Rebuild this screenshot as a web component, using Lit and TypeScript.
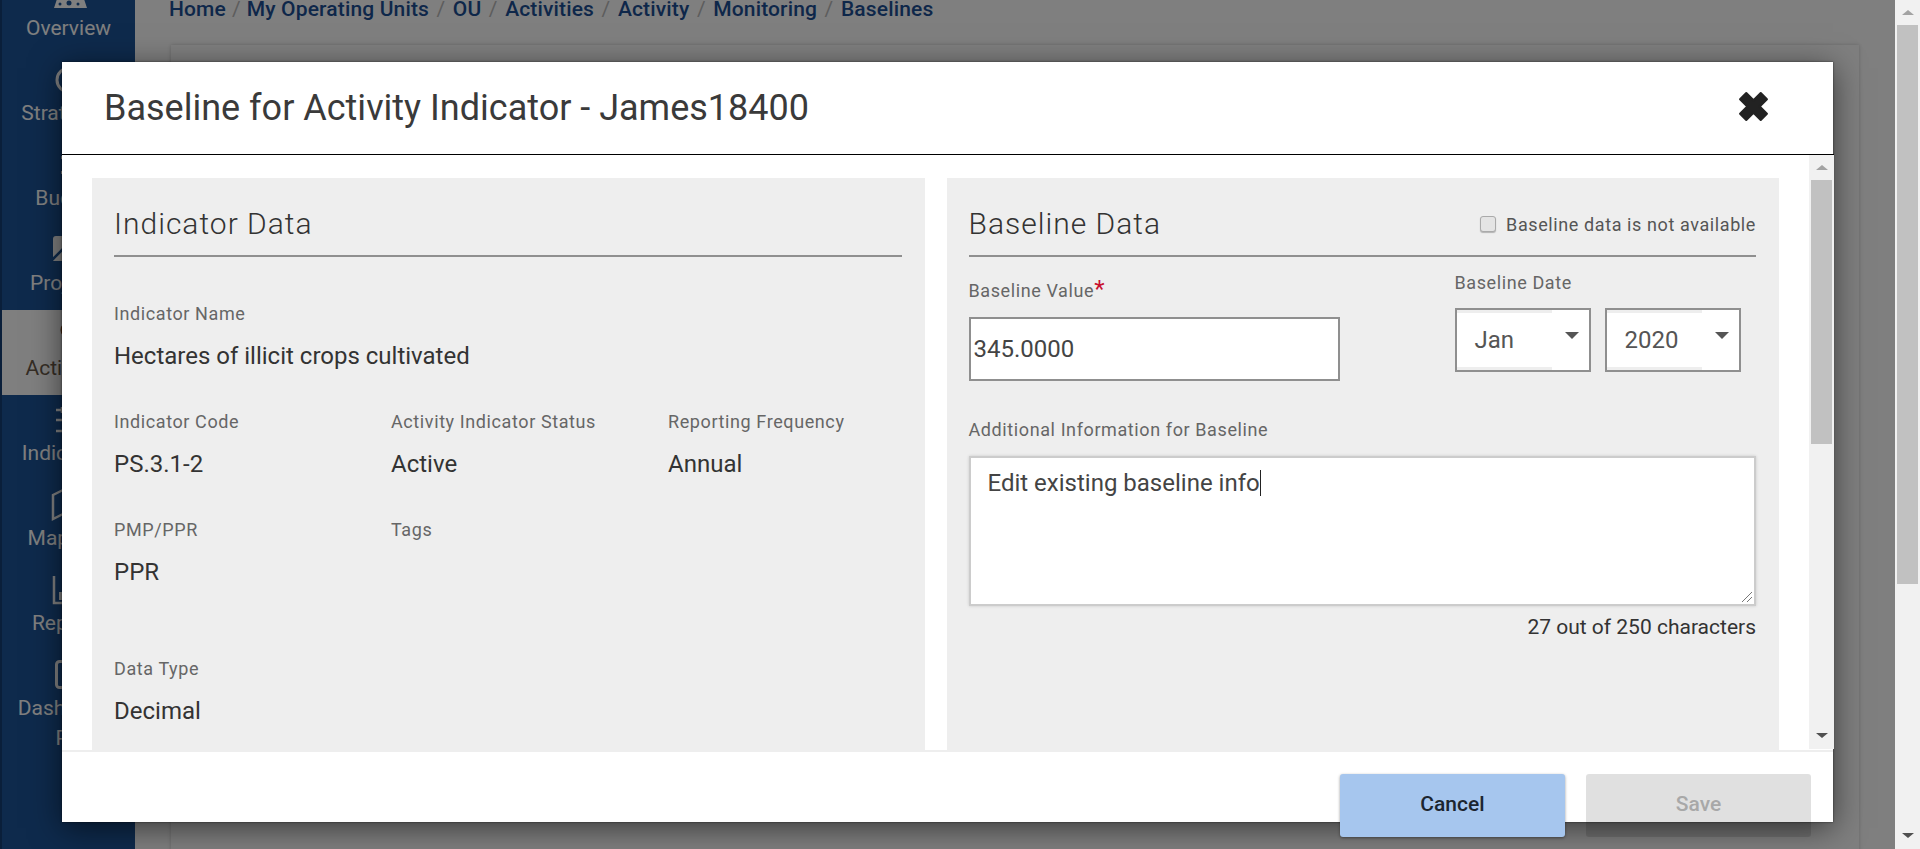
import { LitElement, html, css, svg } from "lit";
import { customElement } from "lit/decorators.js";

// only the left part of each icon shows, the dialog covers the rest
const sideIcons = {
  overview: svg`<path d="M3 31l2-6a15 15 0 0 1 29 0l2 6z" fill="#fff"/><circle cx="18" cy="26" r="2.5" fill="#1c5498"/><circle cx="9" cy="27" r="1.5" fill="#1c5498"/><circle cx="27" cy="27" r="1.5" fill="#1c5498"/>`,
  strategy: svg`<circle cx="18" cy="18" r="12" fill="none" stroke="#fff" stroke-width="3"/><circle cx="18" cy="18" r="5" fill="none" stroke="#fff" stroke-width="2"/>`,
  budget: svg`<path d="M11 9v3M11 24v3" stroke="#fff" stroke-width="2"/>`,
  projects: svg`<path d="M5 4h22v25H2V7a3 3 0 0 1 3-3z" fill="#fff"/><path d="M1 28l12-12" stroke="#1c5498" stroke-width="2.5"/>`,
  activities: svg`<circle cx="18" cy="13" r="7" fill="none" stroke="#8a4b1c" stroke-width="3"/>`,
  indicators: svg`<path d="M5 8h22M5 18h22M5 29h22M11 5v6" stroke="#fff" stroke-width="2.5"/>`,
  maps: svg`<path d="M2 8l10-5 12 5 10-5v24l-10 5-12-5-10 5z" fill="none" stroke="#fff" stroke-width="2.5"/>`,
  reports: svg`<path d="M3 4v27h31" fill="none" stroke="#fff" stroke-width="2.5"/><path d="M8 20h4v8H8zM14 12h4v16h-4zM20 16h4v12h-4z" fill="#fff"/>`,
  dash: svg`<rect x="5.5" y="4.5" width="25" height="26" rx="3" fill="none" stroke="#fff" stroke-width="3"/>`,
};

const sideItems = [
  { icon: sideIcons.overview, lines: ["Overview"] },
  { icon: sideIcons.strategy, lines: ["Strategies"] },
  { icon: sideIcons.budget, lines: ["Budget"] },
  { icon: sideIcons.projects, lines: ["Projects"] },
  { icon: sideIcons.activities, lines: ["Activities"], active: true },
  { icon: sideIcons.indicators, lines: ["Indicators"] },
  { icon: sideIcons.maps, lines: ["Mapping"] },
  { icon: sideIcons.reports, lines: ["Reports"] },
  { icon: sideIcons.dash, lines: ["Dashboard", "PR"] },
];

const crumbs = ["Home", "My Operating Units", "OU", "Activities", "Activity", "Monitoring", "Baselines"];

@customElement("app-root")
export class AppRoot extends LitElement {
  static styles = css`
    :host {
      display: flex;
      width: 1920px;
      height: 849px;
      overflow: hidden;
      font-family: Roboto, "Liberation Sans", sans-serif;
      background: #fff;
    }
    .page {
      position: relative;
      flex: 1;
      min-width: 0;
      display: flex;
      background: #fff;
    }
    .overlay {
      position: absolute;
      inset: 0;
      background: rgba(0, 0, 0, 0.5);
    }

    /* page behind the dialog */
    .sidebar {
      flex: none;
      width: 133px;
      border-left: 2px solid #143f75;
      background: #1c5498;
      overflow: hidden;
    }
    .side-list {
      margin-top: -30px;
    }
    .side-item {
      display: flex;
      flex-direction: column;
      align-items: center;
      height: 85px;
      box-sizing: border-box;
      padding-top: 7px;
      color: #fff;
      font-size: 21px;
      line-height: 30px;
    }
    .side-item.active {
      background: #fff;
      color: #6b5a4a;
    }
    .side-item svg {
      flex: none;
      width: 36px;
      height: 30px;
      margin-bottom: 6px;
      overflow: visible;
    }
    .main {
      flex: 1;
      min-width: 0;
      padding-left: 34px;
      padding-right: 36px;
      overflow: hidden;
    }
    .crumbs {
      display: flex;
      height: 51px;
      margin-top: -6px;
      font-size: 21px;
      letter-spacing: 0.15px;
      line-height: 30px;
      color: #1c4f94;
      font-weight: 500;
    }
    .crumbs .sep {
      margin: 0 7.5px;
      color: #bbb;
      font-weight: 400;
    }
    .crumbs span:nth-child(2) {
      margin: 0 6px;
    }
    .card {
      height: 900px;
      margin-left: 2px;
      background: #fff;
      box-shadow: 0 0 4px rgba(0, 0, 0, 0.2);
    }

    /* scrollbars */
    .scroll {
      flex: none;
      width: 25px;
      display: flex;
      flex-direction: column;
      align-items: center;
      background: #f1f1f1;
    }
    .scroll.outer {
      height: 849px;
    }
    .scroll.inner {
      height: 594px;
      margin-right: -1px;
    }
    .arrow-up,
    .arrow-down {
      flex: none;
      width: 0;
      height: 0;
      border-left: 6px solid transparent;
      border-right: 6px solid transparent;
    }
    .arrow-up {
      margin: 10px 0;
      border-bottom: 5px solid #a3a3a3;
    }
    .arrow-down {
      margin: 0 0 11px;
      border-top: 5px solid #505050;
    }
    .thumb {
      width: 21px;
      background: #c1c1c1;
    }
    .outer .thumb {
      height: 559px;
    }
    .inner .thumb {
      height: 264px;
    }
    .spacer {
      flex: 1;
    }

    /* dialog */
    .modal {
      position: absolute;
      top: 62px;
      left: 62px;
      width: 1771px;
      height: 760px;
      display: flex;
      flex-direction: column;
      background: #fff;
      box-shadow:
        0 0 2px rgba(0, 0, 0, 0.6),
        0 6px 30px rgba(0, 0, 0, 0.55);
    }
    .modal-head {
      flex: none;
      height: 93px;
      box-sizing: border-box;
      display: flex;
      align-items: center;
      justify-content: space-between;
      padding: 0 65px 0 42px;
      margin-right: -1px;
      border-bottom: 1px solid #000;
    }
    .modal-head h1 {
      margin: 0;
      font-size: 36px;
      font-weight: 400;
      color: #3a3a3a;
    }
    .close {
      width: 31px;
      height: 31px;
      margin-bottom: 3px;
    }
    .modal-body {
      flex: 1;
      min-height: 0;
      display: flex;
    }
    .panels {
      flex: 1;
      min-width: 0;
      display: flex;
      gap: 22px;
      padding: 23px 30px 0;
      overflow: hidden;
    }
    .panel {
      flex: 1 1 0;
      min-width: 0;
      padding: 0 23px 0 22px;
      background: #eee;
    }
    .panel-head {
      display: flex;
      align-items: center;
      justify-content: space-between;
      padding: 26px 0 11px;
      border-bottom: 2px solid #8f8f8f;
    }
    .panel-head h2 {
      margin: 0;
      font-size: 30px;
      line-height: 40px;
      font-weight: 300;
      letter-spacing: 1px;
      color: #333;
    }
    .check {
      display: flex;
      align-items: center;
      gap: 10px;
      font-size: 18px;
      letter-spacing: 0.6px;
      color: #555;
    }
    .check i {
      width: 14px;
      height: 14px;
      border: 1px solid #aaa;
      border-radius: 3px;
      background: #e4e4e4;
      box-shadow: 0 1px 1px rgba(0, 0, 0, 0.25);
    }
    .fields {
      display: grid;
      grid-template-columns: repeat(3, 277px);
      row-gap: 46px;
      margin-top: 47px;
    }
    .field.wide {
      grid-column: 1 / -1;
    }
    .field.tags {
      grid-column: 2 / -1;
    }
    .field.lower {
      margin-top: 31px;
    }
    .label {
      font-size: 18px;
      line-height: 20px;
      letter-spacing: 0.6px;
      color: #666;
    }
    .value {
      margin-top: 22px;
      font-size: 24px;
      line-height: 20px;
      color: #333;
    }
    .baseline-row {
      display: flex;
    }
    .value-col {
      flex: none;
      width: 371px;
      margin-top: 22px;
    }
    .value-col .label {
      line-height: 24px;
    }
    .req {
      color: #c8102e;
      font-size: 24px;
      line-height: 20px;
    }
    .input {
      height: 64px;
      box-sizing: border-box;
      margin-top: 14px;
      padding-left: 3px;
      display: flex;
      align-items: center;
      border: 2px solid #8f8f8f;
      background: #fff;
      font-size: 24px;
      color: #444;
    }
    .date-col {
      margin-left: 115px;
      margin-top: 16px;
    }
    .selects {
      display: flex;
      gap: 14px;
      margin-top: 15px;
    }
    .select {
      width: 136px;
      height: 64px;
      box-sizing: border-box;
      display: flex;
      align-items: center;
      justify-content: space-between;
      padding: 0 10px 6px 18px;
      border: 2px solid #8f8f8f;
      background:
        linear-gradient(#eee, #eee) left top / 72% 3px no-repeat,
        linear-gradient(#eee, #eee) left bottom / 72% 3px no-repeat,
        #fff;
      font-size: 24px;
      color: #555;
    }
    .select span {
      margin-top: 6px;
    }
    .select i {
      width: 0;
      height: 0;
      margin-bottom: 4px;
      border-left: 7px solid transparent;
      border-right: 7px solid transparent;
      border-top: 7px solid #555;
    }
    .info-label {
      margin-top: 39px;
    }
    .textarea {
      position: relative;
      height: 150px;
      box-sizing: border-box;
      margin-top: 16px;
      padding: 10px 17px;
      border: 2px solid #ccc;
      background: #fff;
      box-shadow: 0 0 3px rgba(0, 0, 0, 0.15);
      font-size: 24px;
      line-height: 30px;
      color: #444;
    }
    .caret {
      display: inline-block;
      width: 1px;
      height: 26px;
      vertical-align: -5px;
      background: #222;
    }
    .grip {
      position: absolute;
      right: 1px;
      bottom: 1px;
      width: 14px;
      height: 14px;
    }
    .counter {
      margin-top: 11px;
      text-align: right;
      font-size: 21px;
      line-height: 20px;
      color: #333;
    }
    .modal-foot {
      flex: none;
      height: 72px;
      box-sizing: border-box;
      display: flex;
      justify-content: flex-end;
      gap: 21px;
      padding: 22px 22px 0 0;
      border-top: 2px solid #eee;
    }
    .btn {
      width: 225px;
      height: 63px;
      flex: none;
      box-sizing: border-box;
      display: flex;
      align-items: center;
      justify-content: center;
      padding-bottom: 3px;
      border-radius: 3px;
      font-size: 21px;
      font-weight: 500;
    }
    .btn.cancel {
      background: #a6c6ee;
      color: #1c2530;
      box-shadow: 0 1px 3px rgba(0, 0, 0, 0.4);
    }
    .btn.save {
      background: rgba(0, 0, 0, 0.12);
      color: #a8a8a8;
    }
  `;

  render() {
    return html`
      <div class="page">
        <nav class="sidebar">
          <div class="side-list">
            ${sideItems.map(
              (item) => html`
                <div class="side-item ${item.active ? "active" : ""}">
                  <svg viewBox="0 0 36 30">${item.icon}</svg>
                  ${item.lines.map((line) => html`<span>${line}</span>`)}
                </div>
              `
            )}
          </div>
        </nav>
        <main class="main">
          <div class="crumbs">
            ${crumbs.map(
              (crumb, i) => html`${i > 0 ? html`<span class="sep">/</span>` : ""}<span>${crumb}</span>`
            )}
          </div>
          <div class="card"></div>
        </main>
        <div class="overlay"></div>

        <section class="modal">
          <header class="modal-head">
            <h1>Baseline for Activity Indicator - James18400</h1>
            <svg class="close" viewBox="0 0 30 30">
              <path
                d="M8 2l7 7 7-7 6 6-7 7 7 7-6 6-7-7-7 7-6-6 7-7-7-7z"
                fill="#222"
                stroke="#222"
                stroke-width="2"
                stroke-linejoin="round"
              />
            </svg>
          </header>
          <div class="modal-body">
            <div class="panels">
              <div class="panel">
                <div class="panel-head"><h2>Indicator Data</h2></div>
                <div class="fields">
                  <div class="field wide">
                    <div class="label">Indicator Name</div>
                    <div class="value">Hectares of illicit crops cultivated</div>
                  </div>
                  <div class="field">
                    <div class="label">Indicator Code</div>
                    <div class="value">PS.3.1-2</div>
                  </div>
                  <div class="field">
                    <div class="label">Activity Indicator Status</div>
                    <div class="value">Active</div>
                  </div>
                  <div class="field">
                    <div class="label">Reporting Frequency</div>
                    <div class="value">Annual</div>
                  </div>
                  <div class="field">
                    <div class="label">PMP/PPR</div>
                    <div class="value">PPR</div>
                  </div>
                  <div class="field tags">
                    <div class="label">Tags</div>
                  </div>
                  <div class="field wide lower">
                    <div class="label">Data Type</div>
                    <div class="value">Decimal</div>
                  </div>
                </div>
              </div>
              <div class="panel">
                <div class="panel-head">
                  <h2>Baseline Data</h2>
                  <label class="check"><i></i>Baseline data is not available</label>
                </div>
                <div class="baseline-row">
                  <div class="value-col">
                    <div class="label">Baseline Value<span class="req">*</span></div>
                    <div class="input">345.0000</div>
                  </div>
                  <div class="date-col">
                    <div class="label">Baseline Date</div>
                    <div class="selects">
                      <div class="select"><span>Jan</span><i></i></div>
                      <div class="select"><span>2020</span><i></i></div>
                    </div>
                  </div>
                </div>
                <div class="label info-label">Additional Information for Baseline</div>
                <div class="textarea">
                  Edit existing baseline info<span class="caret"></span>
                  <svg class="grip" viewBox="0 0 14 14">
                    <path d="M13 3L3 13M13 8l-5 5" stroke="#777" stroke-width="1" />
                  </svg>
                </div>
                <div class="counter">27 out of 250 characters</div>
              </div>
            </div>
            <div class="scroll inner">
              <div class="arrow-up"></div>
              <div class="thumb"></div>
              <div class="spacer"></div>
              <div class="arrow-down"></div>
            </div>
          </div>
          <footer class="modal-foot">
            <div class="btn cancel">Cancel</div>
            <div class="btn save">Save</div>
          </footer>
        </section>
      </div>
      <div class="scroll outer">
        <div class="arrow-up"></div>
        <div class="thumb"></div>
        <div class="spacer"></div>
        <div class="arrow-down"></div>
      </div>
    `;
  }
}
